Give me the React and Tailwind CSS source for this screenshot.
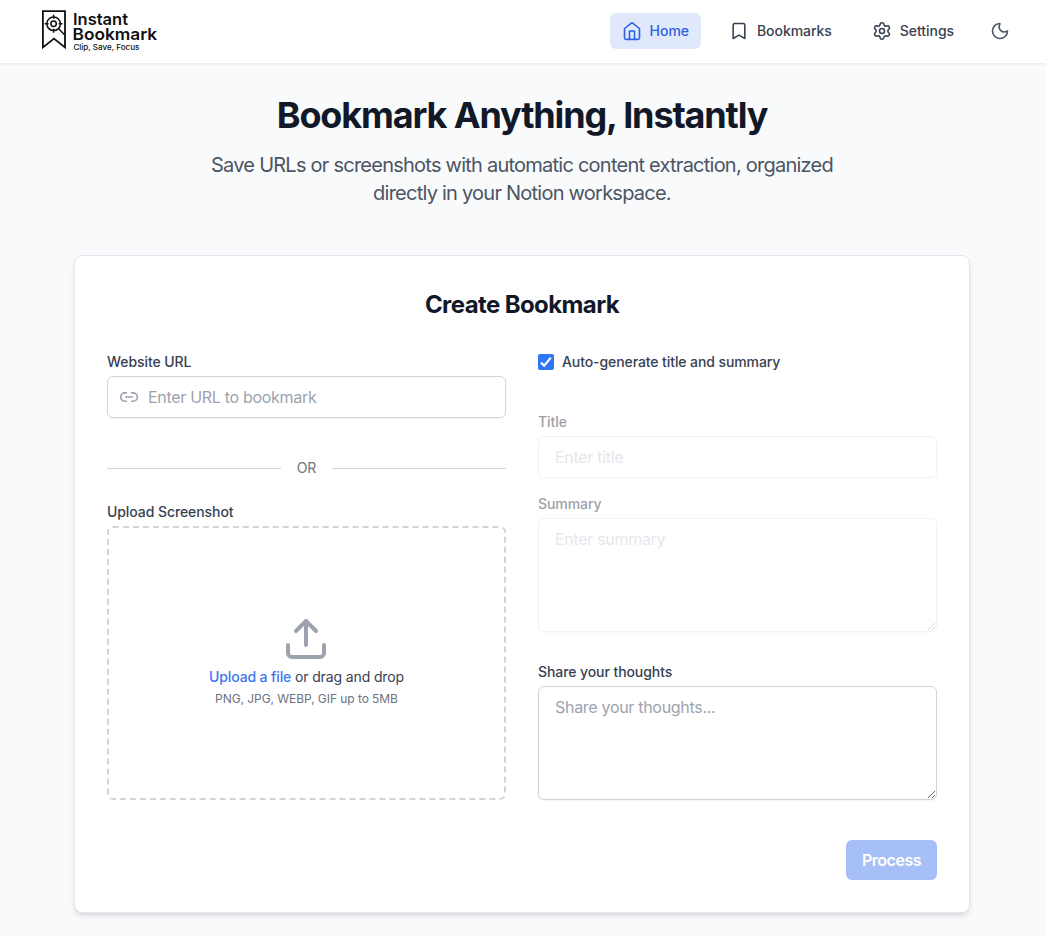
import { Bookmark, Settings, Moon, Link2, Upload } from "lucide-react";

function Logo() {
  return (
    <svg width="120" height="50" viewBox="0 0 120 50" fill="none" stroke="#111" aria-label="Instant Bookmark">
      <path d="M2.9 5.2H25V41.4L14 32.6L2.9 41.4Z" strokeWidth="1.8" />
      <circle cx="13.6" cy="17.8" r="6.8" strokeWidth="1.5" />
      <circle cx="13.6" cy="17.8" r="2.7" strokeWidth="1.5" />
      <path d="M13.6 8.8v4M13.6 22.8v4M4.6 17.8h4M18.6 17.8h4M18.6 22.8L25 29.2" strokeWidth="1.5" />
      <g fill="#111" stroke="none" fontFamily="Inter, sans-serif">
        <text x="33" y="19" fontSize="16.5" fontWeight="600" textLength="55" lengthAdjust="spacingAndGlyphs">
          Instant
        </text>
        <text x="32.6" y="34" fontSize="16.5" fontWeight="600" textLength="84.6" lengthAdjust="spacingAndGlyphs">
          Bookmark
        </text>
        <text x="33.4" y="44.2" fontSize="7.8" fontWeight="500" textLength="66" lengthAdjust="spacingAndGlyphs">
          Clip, Save, Focus
        </text>
      </g>
    </svg>
  );
}

function HomeIcon({ size, strokeWidth }) {
  return (
    <svg
      width={size}
      height={size}
      viewBox="0 0 24 24"
      fill="none"
      stroke="currentColor"
      strokeWidth={strokeWidth}
      strokeLinecap="round"
      strokeLinejoin="round"
    >
      <path d="m3 9 9-7 9 7v11a2 2 0 0 1-2 2H5a2 2 0 0 1-2-2z" />
      <path d="M9 22V12h6v10" />
    </svg>
  );
}

function NavItem({ icon: Icon, label, active }) {
  return (
    <a
      className={
        "flex h-9 items-center gap-2 rounded-md px-3 text-sm font-medium tracking-[-0.05px] " +
        (active ? "bg-[#dfe9fb] text-[#2f5fe3]" : "text-[#374151]")
      }
    >
      <Icon size={20} strokeWidth={1.9} />
      {label}
    </a>
  );
}

const label = "block text-sm font-medium leading-5 tracking-[-0.08px] text-[#374151]";
const field =
  "block w-full rounded-md border border-[#d1d5db] bg-white px-4 py-2 text-base leading-6 tracking-[-0.3px] shadow-xs placeholder:text-[#9ca3af]";

export default function App() {
  return (
    <div className="min-h-[936px] bg-[#f9fafb] font-['Inter',sans-serif] text-[#111827]">
      <header className="flex h-16 items-center justify-between border-b border-[#eceef1] bg-white pb-px pr-7 pl-10 shadow-xs">
        <Logo />
        <nav className="flex items-center gap-4">
          <NavItem icon={HomeIcon} label="Home" active />
          <NavItem icon={Bookmark} label="Bookmarks" />
          <NavItem icon={Settings} label="Settings" />
          <button className="rounded-full p-2 text-[#4b5563]">
            <Moon size={20} strokeWidth={1.9} />
          </button>
        </nav>
      </header>

      <main className="mx-auto w-[898px] pr-0.5 pt-[31px]">
        <div className="text-center">
          <h1 className="text-4xl font-bold leading-10 tracking-[-1.15px]">Bookmark Anything, Instantly</h1>
          <p className="mx-auto mt-4 w-[672px] text-xl leading-7 tracking-[-0.76px] text-[#4b5563]">
            Save URLs or screenshots with automatic content extraction, organized directly in your Notion workspace.
          </p>
        </div>

        <section className="mt-12 rounded-lg border border-[#e5e7eb] bg-white p-8 shadow-md">
          <h2 className="pt-px text-center text-2xl font-bold leading-[31px] tracking-tight">Create Bookmark</h2>
          <div className="mt-8 grid grid-cols-2 gap-8">
            <div className="flex flex-col">
              <label className={label}>Website URL</label>
              <div className="mt-1 flex h-[42px] items-center gap-[9px] rounded-md border border-[#d1d5db] px-[11px] shadow-xs">
                <Link2 size={20} strokeWidth={1.9} className="text-[#9ca3af]" />
                <input
                  className="min-w-0 flex-1 text-base tracking-[-0.3px] placeholder:text-[#9ca3af]"
                  placeholder="Enter URL to bookmark"
                />
              </div>
              <div className="mt-10 flex h-5 items-center gap-4 text-sm text-[#6b7280]">
                <span className="h-px flex-1 bg-[#d1d5db]" />
                OR
                <span className="h-px flex-1 bg-[#d1d5db]" />
              </div>
              <label className={label + " mt-6"}>Upload Screenshot</label>
              <div className="mt-1 flex h-[274px] flex-col items-center justify-center rounded-md border-2 border-dashed border-[#d1d5db] pb-1">
                <Upload size={48} className="mr-px text-[#9ca3af]" />
                <p className="mt-1 text-sm leading-5 tracking-[-0.13px] text-[#374151]">
                  <span className="font-medium text-[#3b76f0]">Upload a file</span> or drag and drop
                </p>
                <p className="mt-1 text-xs leading-4 tracking-[-0.06px] text-[#6b7280]">PNG, JPG, WEBP, GIF up to 5MB</p>
              </div>
            </div>

            <div>
              <label className="flex h-5 items-center gap-2 text-sm font-medium tracking-[-0.09px] text-[#374151]">
                <span className="flex size-4 items-center justify-center rounded-xs bg-[#2f76f6]">
                  <svg width="16" height="16" viewBox="0 0 16 16" fill="none" stroke="white" strokeWidth="2.2">
                    <path d="M3 8.6L6.2 11.7L12.8 3.6" />
                  </svg>
                </span>
                Auto-generate title and summary
              </label>
              <div className="mt-10 opacity-50">
                <label className={label}>Title</label>
                <input className={field + " mt-1 h-[42px] opacity-50"} placeholder="Enter title" />
                <label className={label + " mt-4"}>Summary</label>
                <textarea className={field + " mt-1 h-[114px] resize-y opacity-50"} placeholder="Enter summary" />
              </div>
              <label className={label + " mt-[30px]"}>Share your thoughts</label>
              <textarea className={field + " mt-1 h-[114px] resize-y"} placeholder="Share your thoughts..." />
            </div>
          </div>
          <div className="mt-10 flex justify-end">
            <button className="h-10 w-[91px] rounded-md bg-[#a6bff7] text-base font-semibold tracking-[-0.5px] text-white">
              Process
            </button>
          </div>
        </section>
      </main>
    </div>
  );
}
